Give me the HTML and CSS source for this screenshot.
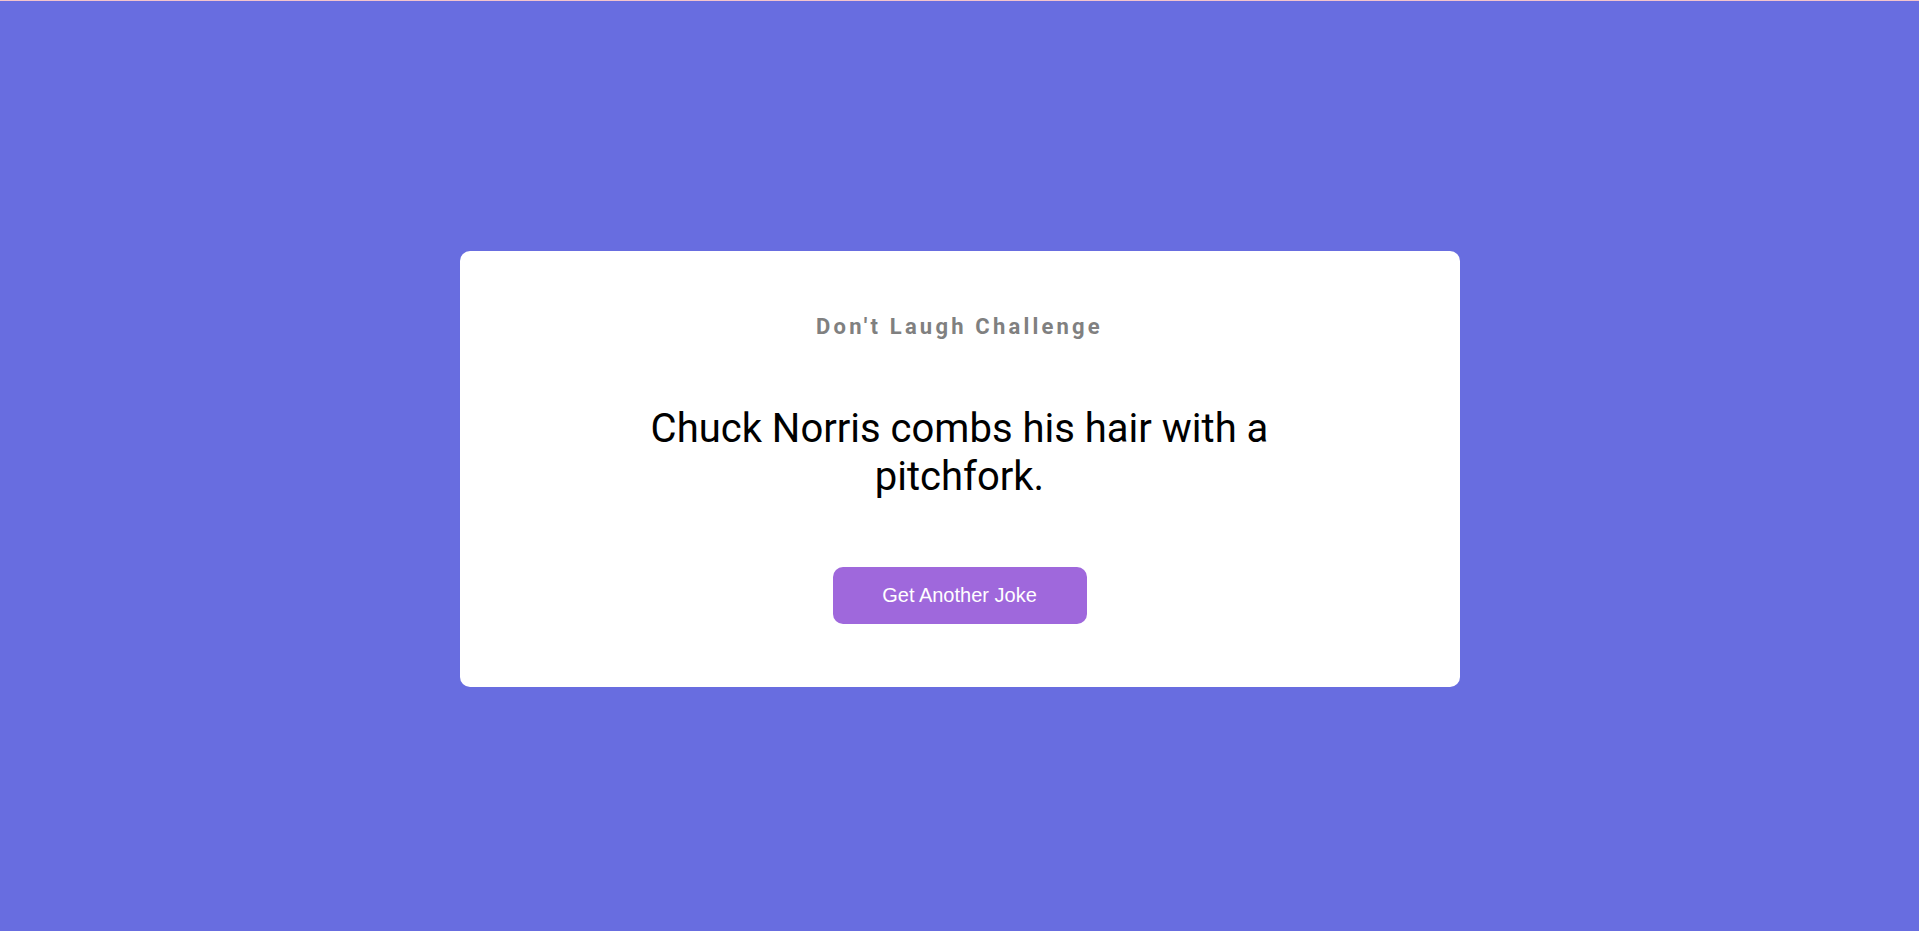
FILE: index.html
```html
<!DOCTYPE html>
<html lang="en">
<head>
<meta charset="utf-8">
<title>Don't Laugh Challenge</title>
<link rel="stylesheet" href="styles.css">
</head>
<body>
<div class="page">
  <div class="card">
    <h3 class="title">Don't Laugh Challenge</h3>
    <div class="joke">Chuck Norris combs his hair with a pitchfork.</div>
    <button class="btn">Get Another Joke</button>
  </div>
</div>
</body>
</html>
```
FILE: styles.css
```css
* { box-sizing: border-box; }
html, body { margin: 0; padding: 0; }
body {
  background: #686de0;
  border-top: 1px solid #f3c4cc;
  font-family: Roboto, "Liberation Sans", sans-serif;
}
.page {
  min-height: 930px;
  display: flex;
  align-items: center;
  justify-content: center;
  padding-top: 5px;
}
.card {
  width: 1000px;
  height: 436px;
  background: #ffffff;
  border-radius: 10px;
  display: flex;
  flex-direction: column;
  align-items: center;
  padding: 63px 50px 0;
}
.title {
  margin: 0;
  font-size: 22px;
  line-height: 26px;
  font-weight: 700;
  letter-spacing: 3.2px;
  color: #808080;
}
.joke {
  margin-top: 65px;
  max-width: 660px;
  text-align: center;
  font-size: 40px;
  line-height: 48px;
  color: #000;
}
.btn {
  margin-top: 66px;
  width: 254px;
  height: 57px;
  border: none;
  border-radius: 10px;
  background: #9f68dc;
  color: #fff;
  font-family: "Liberation Sans", Arial, sans-serif;
  font-size: 20px;
}
```
